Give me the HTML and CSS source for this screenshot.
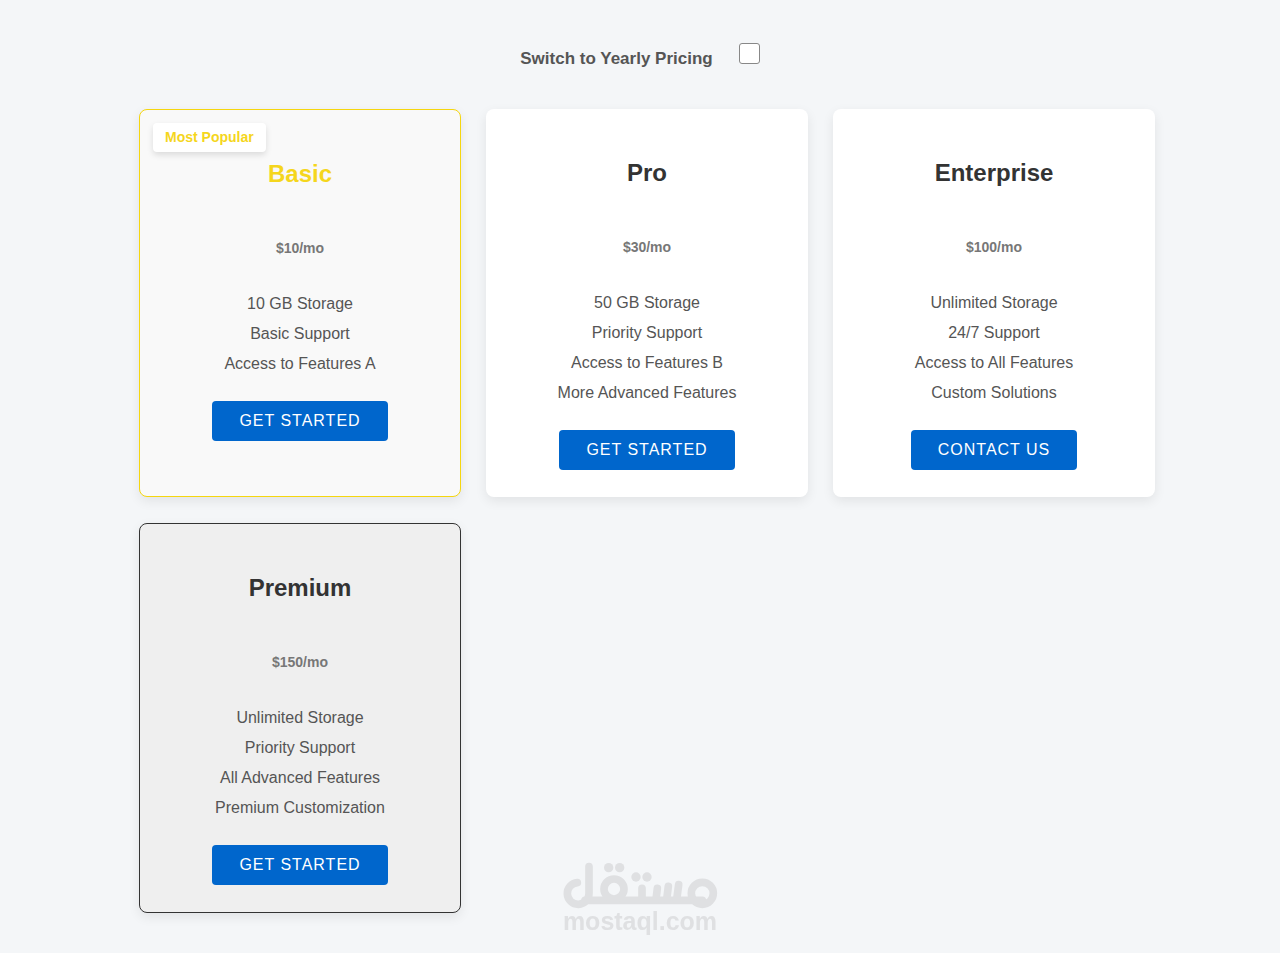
FILE: index.html
```html
<!DOCTYPE html>
<html lang="en">
<head>
    <meta charset="UTF-8">
    <meta name="viewport" content="width=device-width, initial-scale=1.0">
    <title>Pricing</title>
    <link rel="stylesheet" href="styles.css">
</head>
<body>
    <div class="pricing-toggle">
        <label for="yearly">Switch to Yearly Pricing</label>
        <input type="checkbox" id="yearly">
    </div>

    <main class="pricing-grid">
        <section class="card popular">
            <span class="badge">Most Popular</span>
            <h2>Basic</h2>
            <p class="price">$10/mo</p>
            <ul>
                <li>10 GB Storage</li>
                <li>Basic Support</li>
                <li>Access to Features A</li>
            </ul>
            <button type="button">Get Started</button>
        </section>
        <section class="card">
            <h2>Pro</h2>
            <p class="price">$30/mo</p>
            <ul>
                <li>50 GB Storage</li>
                <li>Priority Support</li>
                <li>Access to Features B</li>
                <li>More Advanced Features</li>
            </ul>
            <button type="button">Get Started</button>
        </section>
        <section class="card">
            <h2>Enterprise</h2>
            <p class="price">$100/mo</p>
            <ul>
                <li>Unlimited Storage</li>
                <li>24/7 Support</li>
                <li>Access to All Features</li>
                <li>Custom Solutions</li>
            </ul>
            <button type="button">Contact Us</button>
        </section>
        <section class="card premium">
            <h2>Premium</h2>
            <p class="price">$150/mo</p>
            <ul>
                <li>Unlimited Storage</li>
                <li>Priority Support</li>
                <li>All Advanced Features</li>
                <li>Premium Customization</li>
            </ul>
            <button type="button">Get Started</button>
        </section>
    </main>

    <div class="watermark">
        <svg viewBox="66 36 468 141" width="156" height="47" aria-hidden="true">
            <g fill="none" stroke="currentColor" stroke-width="23" stroke-linecap="round">
                <path d="M112 98a32.5 32.5 0 1 0 35 32V50"/>
                <path d="M135 151H487"/>
                <circle cx="222" cy="117" r="30"/>
                <path d="M306 115v34M352 115l-4 34M385 109l-5 40M416 104l-6 45"/>
                <circle cx="487" cy="130" r="33"/>
            </g>
            <g fill="currentColor">
                <circle cx="206" cy="53" r="14"/>
                <circle cx="239" cy="53" r="14"/>
                <circle cx="288" cy="81" r="14"/>
                <circle cx="321" cy="81" r="14"/>
            </g>
        </svg>
        <span>mostaql.com</span>
    </div>
</body>
</html>
```
FILE: styles.css
```css
* {
    box-sizing: border-box;
}

body {
    margin: 0;
    padding: 39px 20px;
    background-color: #f4f6f8;
    font-family: "Liberation Sans", Arial, sans-serif;
    color: #555;
}

.pricing-toggle {
    display: flex;
    justify-content: center;
    align-items: baseline;
    gap: 26px;
    margin-bottom: 40px;
    font-size: 17px;
    font-weight: bold;
}

.pricing-toggle input {
    appearance: none;
    width: 21px;
    height: 21px;
    margin: 4px 0 0;
    border: 1px solid #888;
    border-radius: 3px;
    background-color: #fff;
}

.pricing-toggle input:checked {
    background-color: #0066cc;
}

.pricing-grid {
    display: grid;
    grid-template-columns: repeat(auto-fit, minmax(300px, 1fr));
    gap: 26px 25px;
    max-width: 1030px;
    margin: 0 auto;
    padding-left: 14px;
}

.card {
    position: relative;
    padding: 27px;
    border-radius: 8px;
    background-color: #fff;
    box-shadow: 0 4px 12px rgba(0, 0, 0, 0.08);
    text-align: center;
}

.card h2 {
    margin: 23px 0 50px;
    font-size: 24px;
    line-height: 28px;
    color: #333;
}

.price {
    margin: 0 0 31px;
    font-size: 14px;
    font-weight: bold;
    line-height: 20px;
    color: #777;
}

.card ul {
    list-style: none;
    margin: 0 0 22px;
    padding: 0;
    font-size: 16px;
    line-height: 30px;
}

.card button {
    height: 40px;
    padding: 0 27px;
    border: none;
    border-radius: 4px;
    background-color: #0066cc;
    color: #fff;
    font-family: inherit;
    font-size: 16px;
    letter-spacing: 1px;
    text-transform: uppercase;
    cursor: pointer;
}

.card button:hover {
    background-color: #0052a3;
}

.popular {
    border: 1px solid #f5d60f;
    background-color: #f9f9f9;
}

.popular h2 {
    color: #f5d61d;
}

.premium {
    border: 1px solid #333;
    background-color: #efefef;
}

.badge {
    position: absolute;
    top: 13px;
    left: 13px;
    padding: 0 12px;
    border-radius: 4px;
    background-color: #fff;
    box-shadow: 0 3px 6px rgba(0, 0, 0, 0.12);
    font-size: 14px;
    font-weight: bold;
    line-height: 29px;
    color: #f5d61d;
}

.watermark {
    position: fixed;
    bottom: 20px;
    left: 50%;
    display: flex;
    flex-direction: column;
    align-items: center;
    transform: translateX(-50%);
    font-size: 25px;
    font-weight: bold;
    line-height: 24px;
    color: #dfe0e2;
    pointer-events: none;
}
```
